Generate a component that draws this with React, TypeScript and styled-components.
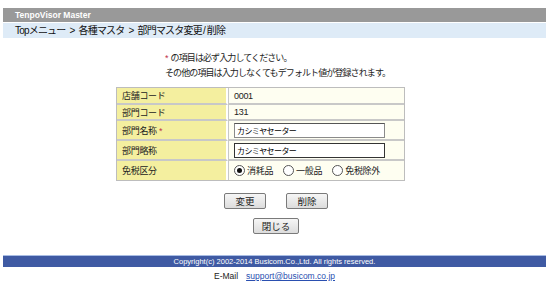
import React, { useState } from 'react';
import styled, { createGlobalStyle } from 'styled-components';

const GlobalStyle = createGlobalStyle`
  html, body {
    margin: 0;
    padding: 0;
    background: #ffffff;
  }
  body {
    font-family: "Liberation Sans", "Noto Sans CJK JP", sans-serif;
    font-size: 11px;
    color: #222222;
  }
`;

const Page = styled.div`
  padding: 8px 4px 0 3px;
`;

const TitleBar = styled.div`
  height: 14px;
  background: #999999;
  color: #ffffff;
  font-weight: bold;
  font-size: 8.5px;
  line-height: 14px;
  padding-left: 12px;
`;

const Breadcrumb = styled.div`
  height: 15px;
  background: #deebf7;
  border-top: 1px solid #ffffff;
  font-size: 10px;
  letter-spacing: -0.8px;
  word-spacing: 2px;
  line-height: 15px;
  padding-left: 12px;
  color: #111111;
`;

const Slash = styled.span`
  letter-spacing: 0;
  padding: 0 1px;
`;

const Notes = styled.div`
  margin: 13px 0 0 162px;
  line-height: 15px;
  font-size: 9px;
  letter-spacing: -0.9px;
`;

const Star = styled.span`
  color: #c0304a;
  margin-right: 3px;
`;

const FormTable = styled.table`
  margin: 6px 0 0 113px;
  width: 289px;
  border-collapse: separate;
  border-spacing: 0;
  border: 1px solid #bdbdbd;
  font-size: 9px;
  letter-spacing: -0.3px;
`;

const Row = styled.tr<{ $h: number }>`
  height: ${p => p.$h}px;
`;

const LabelCell = styled.td`
  width: 104px;
  background: #f4ef9f;
  padding: 0 0 0 5px;
  border-bottom: 2px solid #c8c8c8;
  border-right: 2px solid #ffffff;
  tr:last-child & {
    border-bottom: none;
  }
`;

const ValueCell = styled.td`
  background: #fefef1;
  padding: 0 0 0 5px;
  border-bottom: 2px solid #c8c8c8;
  border-left: 1px solid #c8c8c8;
  tr:last-child & {
    border-bottom: none;
  }
`;

const TextBox = styled.input<{ $dark?: boolean }>`
  box-sizing: border-box;
  width: 151px;
  height: 15px;
  margin: 0;
  padding: 0 2px;
  font: inherit;
  font-size: 8px;
  letter-spacing: -0.6px;
  background: #ffffff;
  border: 1px solid ${p => (p.$dark ? '#333333' : '#8a8a8a')};
  border-top-color: ${p => (p.$dark ? '#333333' : '#555555')};
  outline: none;
`;

const RadioGroup = styled.div`
  display: flex;
  align-items: center;
  gap: 10px;
`;

const RadioLabel = styled.label`
  display: flex;
  align-items: center;
  gap: 2px;
  cursor: pointer;
`;

const RadioDot = styled.span<{ $on: boolean }>`
  width: 9px;
  height: 9px;
  border-radius: 50%;
  border: 1px solid #555555;
  background: #ffffff;
  display: inline-flex;
  align-items: center;
  justify-content: center;
  &::after {
    content: '';
    width: 5px;
    height: 5px;
    border-radius: 50%;
    background: ${p => (p.$on ? '#111111' : 'transparent')};
  }
`;

const ButtonRow = styled.div<{ $top: number; $gap: number }>`
  display: flex;
  justify-content: center;
  gap: ${p => p.$gap}px;
  margin-top: ${p => p.$top}px;
  padding-left: 3px;
`;

const Button = styled.button<{ $w: number }>`
  width: ${p => p.$w}px;
  height: 16px;
  padding: 0;
  font-family: "Noto Sans CJK JP", sans-serif;
  font-size: 9.5px;
  line-height: 14px;
  color: #222222;
  background: linear-gradient(#f6f6f6, #dcdcdc);
  border: 1px solid #7a7a7a;
  border-radius: 2px;
  cursor: pointer;
`;

const Footer = styled.div`
  margin-top: 21px;
  border-top: 1px solid #a9bde4;
  background: #3f5aa3;
  color: #ffffff;
  height: 11px;
  line-height: 11px;
  font-size: 7.5px;
  text-align: center;
`;

const Contact = styled.div`
  text-align: center;
  margin-top: 3px;
  font-size: 8.5px;
  line-height: 13px;
`;

const MailLink = styled.a`
  color: #2a4fb0;
  margin-left: 8px;
`;

const taxOptions = ['消耗品', '一般品', '免税除外'];

export default function App() {
  const [tax, setTax] = useState('消耗品');

  return (
    <Page>
      <GlobalStyle />
      <TitleBar>TenpoVisor Master</TitleBar>
      <Breadcrumb>
        Topメニュー &gt; 各種マスタ &gt; 部門マスタ変更<Slash>/</Slash>削除
      </Breadcrumb>

      <Notes>
        <div>
          <Star>*</Star>の項目は必ず入力してください。
        </div>
        <div>その他の項目は入力しなくてもデフォルト値が登録されます。</div>
      </Notes>

      <FormTable>
        <tbody>
          <Row $h={17}>
            <LabelCell>店舗コード</LabelCell>
            <ValueCell>0001</ValueCell>
          </Row>
          <Row $h={16}>
            <LabelCell>部門コード</LabelCell>
            <ValueCell>131</ValueCell>
          </Row>
          <Row $h={20}>
            <LabelCell>
              部門名称 <Star>*</Star>
            </LabelCell>
            <ValueCell>
              <TextBox defaultValue="カシミヤセーター" />
            </ValueCell>
          </Row>
          <Row $h={20}>
            <LabelCell>部門略称</LabelCell>
            <ValueCell>
              <TextBox $dark defaultValue="カシミヤセーター" />
            </ValueCell>
          </Row>
          <Row $h={19}>
            <LabelCell>免税区分</LabelCell>
            <ValueCell>
              <RadioGroup>
                {taxOptions.map(opt => (
                  <RadioLabel key={opt} onClick={() => setTax(opt)}>
                    <RadioDot $on={tax === opt} />
                    {opt}
                  </RadioLabel>
                ))}
              </RadioGroup>
            </ValueCell>
          </Row>
        </tbody>
      </FormTable>

      <ButtonRow $top={12} $gap={20}>
        <Button $w={42}>変更</Button>
        <Button $w={42}>削除</Button>
      </ButtonRow>
      <ButtonRow $top={9} $gap={0}>
        <Button $w={46}>閉じる</Button>
      </ButtonRow>

      <Footer>Copyright(c) 2002-2014 Busicom.Co.,Ltd. All rights reserved.</Footer>
      <Contact>
        E-Mail
        <MailLink href="#">support@busicom.co.jp</MailLink>
      </Contact>
    </Page>
  );
}
